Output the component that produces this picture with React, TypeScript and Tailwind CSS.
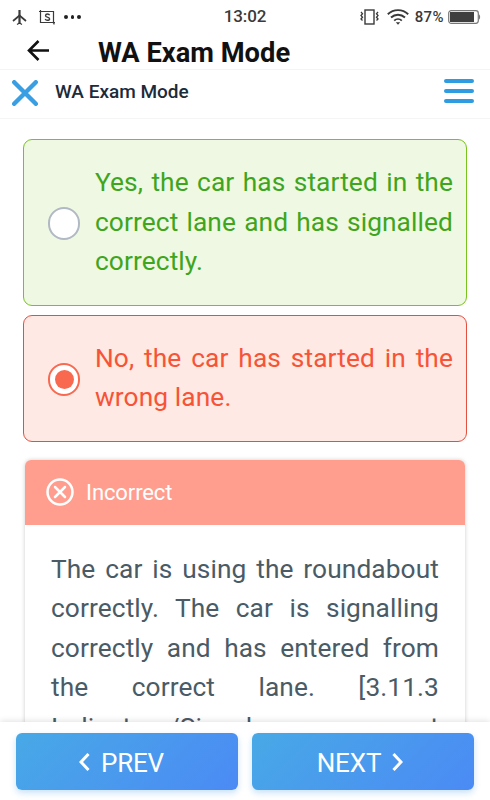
import type { ReactNode } from 'react'

const options = [
  { text: 'Yes, the car has started in the correct lane and has signalled correctly.', correct: true },
  { text: 'No, the car has started in the wrong lane.', correct: false },
] as const

function StatusBar() {
  return (
    <div className="flex h-[34px] items-center justify-between pl-3 pr-[9px] text-[#3a3a3a]">
      <div className="flex w-[160px] items-center">
        <svg width="15" height="17" viewBox="0 0 15 17" fill="none" stroke="currentColor">
          <path d="M7.5 1v14" strokeWidth="2.2" />
          <path d="M7.5 6.500L1 12M7.500 6.500L14 12" strokeWidth="1.700" />
          <path d="M5 15.500l2.500-1.500 2.500 1.500" strokeWidth="1.200" />
        </svg>
        <svg className="ml-3" width="17" height="17" viewBox="0 0 17 17" fill="none" stroke="currentColor">
          <path d="M0 2.500h14.500v12M1.500 1v12.500h14.500M15 13.500v2" strokeWidth="1.200" />
          <path
            d="M10.600 6.200c-.4-.9-1.100-1.200-2-1.200-2.700 0-2.700 2.700-.2 3.100 3 .6 2.800 3.200 0 3.200-1 0-1.800-.4-2.200-1.300"
            strokeWidth="1.400"
          />
        </svg>
        <div className="ml-2 flex gap-[3px]">
          <span className="size-[3.500px] rounded-full bg-[#222]" />
          <span className="size-[3.500px] rounded-full bg-[#222]" />
          <span className="size-[3.500px] rounded-full bg-[#222]" />
        </div>
      </div>
      <span className="mr-[3px] text-[17px] font-medium tracking-[-0.1px]">13:02</span>
      <div className="flex w-[160px] items-center justify-end">
        <svg width="19" height="16" viewBox="0 0 19 16" fill="none" stroke="currentColor">
          <rect x="5" y="1" width="9" height="14" strokeWidth="1.400" />
          <path
            d="M1 3l1.500 1.700L1 6.500l1.500 1.700L1 10l1.500 1.500M18 3l-1.500 1.700L18 6.500l-1.500 1.700L18 10l-1.500 1.500"
            strokeWidth="1.300"
          />
        </svg>
        <svg
          className="ml-2"
          width="22"
          height="16"
          viewBox="0 0 22 16"
          fill="none"
          stroke="currentColor"
          strokeWidth="1.900"
        >
          <path d="M.8 5.200C6.500-.2 15.500-.2 21.200 5.200M4 8.500c4-3.700 10-3.700 14 0M7.200 11.600c2.200-2 5.400-2 7.600 0" />
          <path d="M8.800 13.200h4.400L11 15.800z" fill="currentColor" stroke="none" />
        </svg>
        <span className="ml-1.5 text-[15px] font-medium tracking-[0.4px]">87%</span>
        <svg className="ml-1" width="33" height="14" viewBox="0 0 33 14">
          <rect x=".7" y=".7" width="29.600" height="12.600" rx="2.500" fill="#fff" stroke="#777" strokeWidth="1.200" />
          <rect x="2" y="2" width="24" height="10" fill="#3f3f3f" />
          <path d="M31 4.500c1.500.5 1.500 4.500 0 5z" fill="#777" />
        </svg>
      </div>
    </div>
  )
}

function NavButton({ children }: { children: ReactNode }) {
  return (
    <button className="flex h-[57px] w-[222px] items-center justify-center rounded-[6px] bg-linear-[135deg] from-[#48a9e6] to-[#4b8af5] pt-[3px] text-[26px] leading-8 text-white shadow-[0_3px_6px_rgba(72,160,235,0.3)]">
      {children}
    </button>
  )
}

export default function App() {
  return (
    <div className="flex h-[800px] w-[490px] flex-col overflow-hidden bg-white font-['Roboto',sans-serif]">
      <StatusBar />

      <header className="flex h-[36px] shrink-0 items-center border-b border-[#f4f4f4] pl-[27px]">
        <svg className="-mt-0.5" width="22" height="21" viewBox="0 0 22 21" fill="none" stroke="#111" strokeWidth="2.600">
          <path d="M22 10.500H2.500M11.500 1L2 10.500l9.500 9.500" />
        </svg>
        <h1 className="mt-1 ml-[49px] text-[27.300px] leading-none font-bold text-[#111]">WA Exam Mode</h1>
      </header>

      <div className="flex h-[49px] shrink-0 items-center border-b border-[#f5f5f5] pr-4 pb-[3px] pl-3">
        <svg width="26" height="26" viewBox="0 0 26 26" stroke="#3a9fe2" strokeWidth="4.400" strokeLinecap="round">
          <path d="M2.200 2.200l21.600 21.600M23.800 2.200L2.200 23.800" />
        </svg>
        <span className="ml-[17px] flex-1 text-[19px] font-medium text-[#1c2b3a]">WA Exam Mode</span>
        <div className="-mt-[3px] flex w-[30px] flex-col gap-[6px]">
          <span className="h-[4px] rounded-full bg-[#2f9be0]" />
          <span className="h-[4px] rounded-full bg-[#2f9be0]" />
          <span className="h-[4px] rounded-full bg-[#2f9be0]" />
        </div>
      </div>

      <main className="min-h-0 flex-1 overflow-hidden px-[23px] pt-5">
        <div className="flex flex-col gap-[9px]">
          {options.map((option) => (
            <div
              key={option.text}
              className={`flex items-center gap-[15px] rounded-[9px] border py-[23px] pr-[13px] pl-6 ${
                option.correct
                  ? 'border-[#78c31c] bg-[#eff8e3] text-[#3fa51c]'
                  : 'border-[#e4503f] bg-[#fee9e4] text-[#f75336]'
              }`}
            >
              {option.correct ? (
                <span className="mt-[3px] h-[33px] w-8 shrink-0 rounded-full border-[2.500px] border-[#b1b9c4] bg-white" />
              ) : (
                <span className="mt-[3px] flex h-[33px] w-8 shrink-0 items-center justify-center rounded-full border-[2.500px] border-[#f9694f] bg-white">
                  <span className="size-[19px] rounded-full bg-[#f9694f]" />
                </span>
              )}
              <p className="flex-1 text-justify text-[26.300px] leading-[39.500px] tracking-[0.1px]">{option.text}</p>
            </div>
          ))}
        </div>

        <section className="mx-[2px] mt-[18px] rounded-[6px] shadow-[0_0_4px_rgba(0,0,0,0.2)]">
          <div className="flex h-[65px] items-center rounded-t-[6px] bg-[#ff9e8e] pl-[21px] text-white">
            <svg width="28" height="28" viewBox="0 0 28 28" fill="none" stroke="currentColor" strokeWidth="2.500">
              <circle cx="14" cy="14" r="12.500" />
              <path d="M9 9l10 10M19 9L9 19" strokeLinecap="round" />
            </svg>
            <span className="ml-3 text-[22px] tracking-[-0.1px]">Incorrect</span>
          </div>
          <p className="px-[26px] pt-[25px] pb-6 text-justify text-[26.300px] leading-[39.500px] tracking-[0.1px] text-[#4a5b66]">
            The car is using the roundabout correctly. The car is signalling correctly and has entered from the correct
            lane. [3.11.3 Indicators/Signals you must indicate]
          </p>
        </section>
      </main>

      <footer className="z-10 flex h-[78px] shrink-0 justify-center gap-[14px] bg-white pt-[11px] shadow-[0_-1px_6px_rgba(0,0,0,0.12)]">
        <NavButton>
          <svg
            className="mr-[11px] mb-[3px]"
            width="11"
            height="18"
            viewBox="0 0 11 18"
            fill="none"
            stroke="currentColor"
            strokeWidth="3"
          >
            <path d="M9.500 1L2 9l7.500 8" />
          </svg>
          <span className="mr-[11px] tracking-[-0.2px]">PREV</span>
        </NavButton>
        <NavButton>
          <span className="tracking-[-0.100px]">NEXT</span>
          <svg
            className="mr-[6px] mb-[3px] ml-[11px]"
            width="11"
            height="18"
            viewBox="0 0 11 18"
            fill="none"
            stroke="currentColor"
            strokeWidth="3"
          >
            <path d="M1.500 1L9 9l-7.500 8" />
          </svg>
        </NavButton>
      </footer>
    </div>
  )
}
